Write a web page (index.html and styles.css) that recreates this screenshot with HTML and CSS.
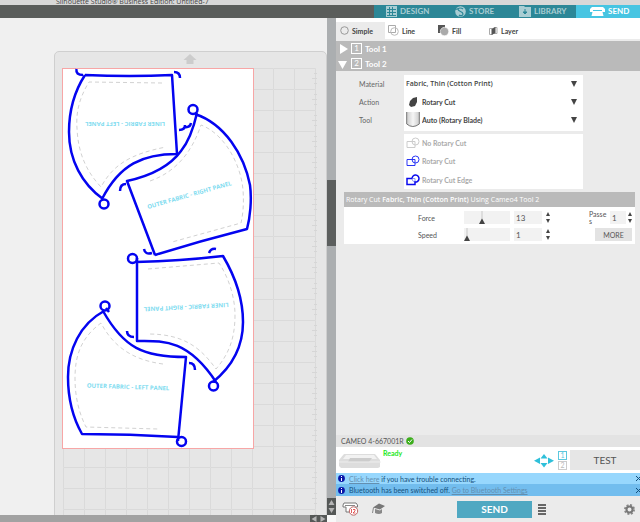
FILE: index.html
```html
<!DOCTYPE html>
<html lang="en">
<head>
    <meta charset="UTF-8">
    <meta name="viewport" content="width=device-width, initial-scale=1.0">
    <title>Silhouette Studio</title>
    <link rel="stylesheet" href="styles.css">
</head>
<body>

    <div class="titlebar"><span>Silhouette Studio® Business Edition: Untitled-7</span></div>

    <nav class="topbar">
        <a href="#design" class="tab tab-design">
            <svg width="11" height="11" viewBox="0 0 11 11"><rect width="11" height="11" fill="#a9cdd3"/><path d="M1 3.5h9M1 6.5h9M1 9.5h9M3.5 1v9M6.5 1v9" stroke="#2c8797"/></svg>
            DESIGN
        </a>
        <a href="#store" class="tab tab-store">
            <svg width="11" height="11" viewBox="0 0 11 11"><circle cx="5.5" cy="5.5" r="5.3" fill="#a9cdd3"/><path d="M0 3c2 1 3-1 5-1s3 1 3 1M3 3c0 3 5 2 5 5 0 2-3 2-4 1" fill="none" stroke="#2c8797" stroke-width="1.2"/></svg>
            STORE
        </a>
        <a href="#library" class="tab tab-library">
            <svg width="12" height="11" viewBox="0 0 12 11"><path d="M0 0h5l1 1h6v10H0z" fill="#a9cdd3"/><path d="M6 3v3M4 6h4L6 8z" fill="#2c8797" stroke="#2c8797"/></svg>
            LIBRARY
        </a>
        <a href="#send" class="tab tab-send">
            <svg width="15" height="10" viewBox="0 0 15 10"><path d="M2 0h11l2 2v3h-2.500l1 4H1.500l1-4H0V2z" fill="#fff"/><path d="M3 3.500h9" stroke="#47c5e2"/></svg>
            SEND
        </a>
    </nav>

    <div class="workspace">
        <div class="canvas-column">
            <main class="canvas">
                <div class="mat">
                    <svg width="271" height="600" viewBox="55 52 271 600">
                        <defs>
                            <pattern id="grid" x="63" y="68" width="21" height="21" patternUnits="userSpaceOnUse">
                                <path d="M.5 21V.5H21" fill="none" stroke="#dadada"/>
                            </pattern>
                            <pattern id="ruler" x="312" y="68" width="5" height="21" patternUnits="userSpaceOnUse">
                                <path d="M2 5.500h3M0 10.500h5M2 15.500h3" stroke="#d6d6d6"/>
                            </pattern>
                        </defs>
                        <path d="M190 54l6.500 6H193.500v4h-7v-4H183.500z" fill="#ccc"/>
                        <rect x="63" y="68" width="253" height="584" fill="url(#grid)"/>
                        <rect x="312" y="68" width="5" height="584" fill="url(#ruler)"/>
                        <rect x="62.500" y="68.500" width="191" height="380" fill="#fff" stroke="#f7a6a6"/>

                        <!-- seam allowances -->
                        <g class="seam">
                            <path d="M162 83L89 82C78 100 76 115 77 128C78 154 87 172 101 187C113 165 130 154 166 147"/>
                            <path d="M150 181C176 172 192 152 201 125C225 134 241 165 243 190C244 204 243 214 241 223L172 242"/>
                            <path d="M148 269L219 263C229 278 235 298 235 315C235 338 229 354 216 369C201 348 184 334 148 334"/>
                            <path d="M163 364C132 360 113 346 101 323C82 337 75 354 75 378C75 397 79 413 86 427L158 429"/>
                        </g>

                        <!-- cut lines -->
                        <g class="cut">
                            <path d="M85 75Q130 77 172 75L177 154C143 154 120 164 102 199M85 75C74 92 69 112 69 132C69 160 82 184 103 199"/>
                            <circle cx="104" cy="204" r="4.500"/>
                            <path d="M76.500 69q-1 6 6.500 6M174 72q6 0 6 6M179 130q6 0 6-5M184 127q6 1 7-4"/>

                            <path d="M155 255L127 181C150 176 170 166 181 151C190 140 194 126 197 113M195 114C225 124 244 155 250 185C252 200 250 218 247 229Q200 241 155 255"/>
                            <circle cx="193" cy="109.500" r="4.500"/>
                            <path d="M120 191q0-7 6-7M144 249q1 6 8 4"/>

                            <path d="M137 258V341C162 341 187 338 216 382M136 262Q180 261 223 256C236 278 243 300 243 322C243 346 234 365 213 382"/>
                            <circle cx="132.500" cy="258.500" r="4.500"/>
                            <circle cx="213.500" cy="386" r="4.500"/>
                            <path d="M209 253q2-5 7-4M127 331q0 6 7 6"/>

                            <path d="M103 311C124 348 143 357 186 357L178 441M104 311C80 324 68 350 68 377C68 399 73 418 82 434Q130 434 178 437"/>
                            <circle cx="105" cy="306" r="4.500"/>
                            <circle cx="181.500" cy="441.500" r="4.500"/>
                            <path d="M106 308l3 4M189 363q6 0 6 7"/>
                        </g>

                        <g class="piece-name">
                            <text transform="translate(125 122) rotate(180)">LINER FABRIC - LEFT PANEL</text>
                            <text transform="translate(190 197) rotate(-16)">OUTER FABRIC - RIGHT PANEL</text>
                            <text transform="translate(186 305) rotate(177)">LINER FABRIC - RIGHT PANEL</text>
                            <text transform="translate(128 389) rotate(2)">OUTER FABRIC - LEFT PANEL</text>
                        </g>
                    </svg>
                </div>
            </main>
            <div class="hscroll">
                <svg width="17" height="7" viewBox="0 0 17 7"><rect width="17" height="7" fill="#555857"/><path d="M6.500 1v6L1.500 4zM10.500 1v6l5-3z" fill="#b5b5b5"/></svg>
            </div>
        </div>

        <div class="vscroll">
            <div class="thumb"></div>
            <svg width="9" height="17" viewBox="0 0 9 17"><rect width="9" height="17" fill="#555857"/><path d="M4.500 2l3 5h-6zM4.500 15l3-5h-6z" fill="#b5b5b5"/></svg>
            <div class="corner"></div>
        </div>

        <aside class="panel">
            <div class="modes">
                <button class="mode mode-simple active">
                    <svg width="9" height="9" viewBox="0 0 9 9"><circle cx="4.500" cy="4.500" r="3.800" fill="none" stroke="#999"/></svg>
                    Simple
                </button>
                <button class="mode mode-line">
                    <svg width="11" height="11" viewBox="0 0 11 11"><path d="M.5.5h7v7h-7z" fill="none" stroke="#aaa"/><circle cx="6.500" cy="6.500" r="3.800" fill="none" stroke="#bbb"/></svg>
                    Line
                </button>
                <button class="mode mode-fill">
                    <svg width="11" height="11" viewBox="0 0 11 11"><path d="M0 0h7v8H0z" fill="#555"/><circle cx="6.500" cy="6.500" r="4.200" fill="#aaa" stroke="#fff" stroke-width=".6"/></svg>
                    Fill
                </button>
                <button class="mode mode-layer">
                    <svg width="9" height="10" viewBox="0 0 9 10"><path d="M.5 2.500h3v6h-3zM5 1.500h3v6H5z" fill="#fff" stroke="#aaa"/><path d="M2.500 3l4-2v6l-4 2z" fill="#555"/></svg>
                    Layer
                </button>
            </div>

            <div class="tool-row">
                <svg width="12" height="12" viewBox="0 0 12 12"><path d="M2 1l8 5L2 11z" fill="#fff"/></svg>
                <span class="tool-number">1</span>
                Tool 1
            </div>
            <div class="tool-row">
                <svg width="12" height="12" viewBox="0 0 12 12"><path d="M0 3h9l-4.500 8z" fill="#fff"/></svg>
                <span class="tool-number">2</span>
                Tool 2
            </div>

            <div class="settings">
                <div class="field-labels">
                    <label for="material">Material</label>
                    <label for="action">Action</label>
                    <label for="tool">Tool</label>
                </div>
                <div class="field-values">
                    <div class="selects">
                        <div class="select-row">
                            <select id="material"><option>Fabric, Thin (Cotton Print)</option></select>
                            <svg class="arrow" width="6" height="6" viewBox="0 0 6 6"><path d="M0 0h6L3 6z" fill="#444"/></svg>
                        </div>
                        <div class="select-row">
                            <svg class="pic" width="14" height="16" viewBox="0 0 14 16"><path d="M7 4l4-1v5l-2 4-4 1-2-2 1-4z" fill="#444"/></svg>
                            <select id="action"><option>Rotary Cut</option></select>
                            <svg class="arrow" width="6" height="6" viewBox="0 0 6 6"><path d="M0 0h6L3 6z" fill="#444"/></svg>
                        </div>
                        <div class="select-row">
                            <svg class="pic" width="14" height="16" viewBox="0 0 14 16"><defs><linearGradient id="blade"><stop offset="0" stop-color="#ccc"/><stop offset=".5" stop-color="#f6f6f6"/><stop offset="1" stop-color="#ccc"/></linearGradient></defs><path d="M.7 0v12q6 5 12.600 0V0z" fill="url(#blade)"/><path d="M.7 0v12q6 5 12.600 0V0" fill="none" stroke="#777"/></svg>
                            <select id="tool"><option>Auto (Rotary Blade)</option></select>
                            <svg class="arrow" width="6" height="6" viewBox="0 0 6 6"><path d="M0 0h6L3 6z" fill="#444"/></svg>
                        </div>
                    </div>
                    <div class="cut-options">
                        <button class="cut-option">
                            <svg width="14" height="12" viewBox="0 0 14 12"><path d="M1 4.500h8v6H1z" fill="none" stroke="#ccc"/><circle cx="9.500" cy="4.500" r="3.500" fill="none" stroke="#ccc"/></svg>
                            No Rotary Cut
                        </button>
                        <button class="cut-option">
                            <svg width="14" height="12" viewBox="0 0 14 12"><path d="M1 4.500h8v6H1z" fill="none" stroke="#2a35f5"/><circle cx="9.500" cy="4.500" r="3.500" fill="none" stroke="#2a35f5"/></svg>
                            Rotary Cut
                        </button>
                        <button class="cut-option">
                            <svg width="14" height="12" viewBox="0 0 14 12"><path d="M6 4.500h3v3.500M6 4.500a3.500 3.500 0 0 0 3 3.500" fill="none" stroke="#8f95fa"/><path d="M6 4.500H1v6h8V8a3.500 3.500 0 1 0-3-3.500" fill="none" stroke="#0a0aee" stroke-width="1.500"/></svg>
                            Rotary Cut Edge
                        </button>
                    </div>
                </div>
            </div>

            <section class="cut-settings">
                <h2>Rotary Cut <b>Fabric, Thin (Cotton Print)</b> Using Cameo4 Tool 2</h2>
                <div class="cut-grid">
                    <label for="force">Force</label>
                    <input type="range" id="force" min="1" max="33" value="13">
                    <input type="text" id="forceValue" class="value" value="13" aria-label="Force value">
                    <svg class="stepper" width="4" height="11" viewBox="0 0 4 11"><path d="M0 4l2-4 2 4zM0 7l2 4 2-4z" fill="#444"/></svg>
                    <div class="passes">
                        <label for="passes">Passe<br>s</label>
                        <input type="text" id="passes" class="value" value="1">
                        <svg class="stepper" width="4" height="11" viewBox="0 0 4 11"><path d="M0 4l2-4 2 4zM0 7l2 4 2-4z" fill="#444"/></svg>
                    </div>
                    <label for="speed">Speed</label>
                    <input type="range" id="speed" min="1" max="30" value="1">
                    <input type="text" id="speedValue" class="value" value="1" aria-label="Speed value">
                    <svg class="stepper" width="4" height="11" viewBox="0 0 4 11"><path d="M0 4l2-4 2 4zM0 7l2 4 2-4z" fill="#444"/></svg>
                    <button class="more">MORE</button>
                </div>
            </section>

            <footer class="machine">
                <div class="machine-name">
                    CAMEO 4-667001R
                    <svg width="8" height="8" viewBox="0 0 8 8"><circle cx="4" cy="4" r="3.800" fill="#3cae1c"/><path d="M2 4l1.500 1.500L6 2.500" fill="none" stroke="#fff"/></svg>
                </div>
                <div class="machine-status">
                    <svg class="cutter" width="44" height="15" viewBox="0 0 44 15"><path d="M6 1h31l5 6v7l-2 1H3l-2-2V7z" fill="#ddd"/><path d="M8 2h28l3 4H5z" fill="#f2f2f2"/><path d="M12 5h22l-3 4H10z" fill="#ccc"/><path d="M1 9h42" stroke="#eee"/></svg>
                    <span class="ready">Ready</span>
                    <svg class="move" width="20" height="15" viewBox="0 0 20 15"><path d="M10 1l3.500 4.500h-7zM10 14.500L13.500 10h-7zM0 7.700l6-3.200v6.400zM20 7.700l-6-3.200v6.400z" fill="#2fc0da"/></svg>
                    <div class="tool-picks"><span class="picked">1</span><span>2</span></div>
                    <button class="test">TEST</button>
                </div>
                <div class="notice">
                    <svg width="7" height="7" viewBox="0 0 7 7"><circle cx="3.500" cy="3.500" r="3.400" fill="#0916a8"/><path d="M3.500 1v1M3.500 3v3" stroke="#fff"/></svg>
                    <p><a href="#help">Click here</a> if you have trouble connecting.</p>
                    <button class="close" aria-label="Close"><svg width="4" height="5" viewBox="0 0 4 5"><path d="M0 0l5 5M5 0L0 5" stroke="#14507c"/></svg></button>
                </div>
                <div class="notice notice-dark">
                    <svg width="7" height="7" viewBox="0 0 7 7"><circle cx="3.500" cy="3.500" r="3.400" fill="#0916a8"/><path d="M3.500 1v1M3.500 3v3" stroke="#fff"/></svg>
                    <p>Bluetooth has been switched off. <a href="#bluetooth">Go to Bluetooth Settings</a></p>
                    <button class="close" aria-label="Close"><svg width="4" height="5" viewBox="0 0 4 5"><path d="M0 0l5 5M5 0L0 5" stroke="#14507c"/></svg></button>
                </div>
                <div class="actions">
                    <svg width="17" height="14" viewBox="0 0 17 14"><path d="M2 1h12l1.500 2v2H13v5H4V5H1V3z" fill="#fff" stroke="#777"/><path d="M3 3.500h10" stroke="#888"/><circle cx="11.500" cy="9" r="4.200" fill="#fff" stroke="#b66"/><path d="M9.500 7v4M11 7.500h2v1.500l-2 2h2.500" fill="none" stroke="#d33" stroke-width=".8"/></svg>
                    <svg width="14" height="12" viewBox="0 0 14 12"><path d="M8 .5l6 2.500-5 3.500-7-2z" fill="#777"/><path d="M4 6v4q4 2 7 0V6L9 7.500z" fill="#888"/><path d="M2.500 4.500L1.500 10" stroke="#888"/></svg>
                    <button class="send">SEND</button>
                    <svg width="8" height="11" viewBox="0 0 8 11"><path d="M0 1h8M0 4h8M0 7h8M0 10h8" stroke="#666" stroke-width="2"/></svg>
                    <svg class="gear" width="11" height="11" viewBox="0 0 11 11"><circle cx="5.500" cy="5.500" r="4.500" fill="none" stroke="#888" stroke-width="2" stroke-dasharray="2 1.530"/><circle cx="5.500" cy="5.500" r="3" fill="none" stroke="#777" stroke-width="2"/></svg>
                </div>
            </footer>
        </aside>
    </div>

</body>
</html>
```
FILE: styles.css
```css
* {
    box-sizing: border-box;
}
body {
    display: flex;
    flex-direction: column;
    height: 100vh;
    margin: 0;
    overflow: hidden;
    background-color: #ebebeb;
    color: #555;
    font-family: Lato, "Open Sans", sans-serif;
    font-size: 8px;
}
svg {
    display: block;
    flex: none;
}
button {
    padding: 0;
    border: none;
    background: none;
    color: inherit;
    font: inherit;
}
.titlebar {
    display: flex;
    align-items: flex-end;
    height: 5px;
    flex: none;
    padding-left: 56px;
    overflow: hidden;
    background-color: #d8d8d8;
    color: #444;
    font-family: "Open Sans", sans-serif;
    font-size: 7px;
    line-height: 7px;
}

/* page tabs */
.topbar {
    display: flex;
    justify-content: flex-end;
    height: 13px;
    flex: none;
    background-color: #5a5d5b;
}
.tab {
    display: flex;
    align-items: center;
    gap: 3px;
    background-color: #2c8797;
    color: #a9cdd3;
    font-size: 8px;
    font-weight: bold;
    line-height: 13px;
    text-decoration: none;
}
.tab-design {
    width: 78px;
    padding-left: 12px;
}
.tab-store {
    width: 66px;
    padding-left: 3px;
}
.tab-library {
    width: 58px;
    padding-left: 1px;
}
.tab-send {
    width: 64px;
    padding-left: 14px;
    background-color: #47c5e2;
    color: #fff;
}

.workspace {
    display: flex;
    flex: 1;
    min-height: 0;
}

/* drawing area */
.canvas-column {
    display: flex;
    flex-direction: column;
    flex: 1;
    min-width: 0;
}
.canvas {
    display: flex;
    justify-content: flex-end;
    flex: 1;
    min-height: 0;
    padding-top: 33px;
    overflow: hidden;
    background-color: #f0f0f0;
}
.mat {
    height: 602px;
    border: 1px solid #cfcfcf;
    border-radius: 5px;
    background-color: #e6e6e6;
}
.cut {
    fill: none;
    stroke: #0404f0;
    stroke-width: 2.5px;
    stroke-linejoin: round;
}
.seam {
    fill: none;
    stroke: #d2d2d2;
    stroke-dasharray: 4 3;
}
.piece-name {
    fill: #7fdcf0;
    font-family: "Open Sans", sans-serif;
    font-size: 6px;
    font-weight: 700;
    text-anchor: middle;
}
.hscroll {
    display: flex;
    justify-content: flex-end;
    height: 7px;
    flex: none;
    background-color: #a2a2a2;
}
.vscroll {
    display: flex;
    flex-direction: column;
    width: 9px;
    flex: none;
    background-color: #abaeb0;
}
.thumb {
    height: 66px;
    margin-top: 162px;
    margin-bottom: auto;
    background-color: #5c5f5e;
}
.corner {
    height: 7px;
    background-color: #f8f8f8;
}

/* send panel */
.panel {
    display: flex;
    flex-direction: column;
    width: 304px;
    flex: none;
    background-color: #ebebeb;
}
.modes {
    display: flex;
    height: 21px;
    margin-bottom: 2px;
    padding-top: 4px;
    background-color: #fff;
}
.mode {
    display: flex;
    align-items: center;
    gap: 3px;
    color: #444;
    font-size: 7px;
    font-weight: bold;
}
.mode.active {
    background-color: #ebebeb;
}
.mode-simple {
    width: 49px;
    padding-left: 4px;
}
.mode-line {
    width: 50px;
    padding-left: 3px;
}
.mode-fill {
    width: 50px;
    padding-left: 3px;
}
.mode-layer {
    width: 50px;
    padding-left: 4px;
}
.tool-row {
    display: flex;
    align-items: center;
    gap: 3px;
    height: 15px;
    padding-left: 2px;
    background-color: #bababa;
    color: #fff;
    font-size: 8px;
    font-weight: bold;
}
.tool-number {
    width: 11px;
    height: 11px;
    margin-left: -2px;
    border: 1px solid #fff;
    font-weight: normal;
    line-height: 9px;
    text-align: center;
}
.settings {
    display: flex;
    padding: 4px 57px 0 23px;
}
.field-labels {
    width: 45px;
    color: #666;
    font-size: 7px;
    line-height: 18px;
}
.field-labels label {
    display: block;
}
.field-values {
    flex: 1;
}
.selects,
.cut-options {
    background-color: #fff;
}
.selects {
    height: 56px;
    margin-bottom: 3px;
}
.select-row {
    display: flex;
    align-items: center;
    height: 18px;
    padding: 0 6px 0 2px;
}
.select-row select {
    flex: 1;
    min-width: 0;
    padding: 0;
    border: none;
    appearance: none;
    background: none;
    color: #444;
    font-family: inherit;
    font-size: 7px;
    font-weight: bold;
    line-height: 12px;
}
.select-row #material {
    font-family: "Open Sans", sans-serif;
    font-weight: 600;
}
.pic {
    margin-right: 2px;
}
.cut-options {
    display: flex;
    flex-direction: column;
    height: 55px;
}
.cut-option {
    display: flex;
    align-items: center;
    gap: 2px;
    flex: 1;
    padding-left: 2px;
    color: #aaa;
    font-size: 7px;
    font-weight: bold;
}
.cut-settings {
    margin: 3px 5px 0 8px;
    background-color: #fff;
}
.cut-settings h2 {
    height: 15px;
    margin: 0;
    padding-left: 2px;
    background-color: #bababa;
    color: #fff;
    font-family: "Open Sans", sans-serif;
    font-size: 7px;
    font-weight: normal;
    line-height: 15px;
}
.cut-settings h2 b {
    font-weight: 600;
}
.cut-grid {
    display: grid;
    grid-template-columns: 42px 46px 28px 4px 1fr;
    grid-template-rows: 13px 13px;
    column-gap: 4px;
    row-gap: 4px;
    align-items: center;
    padding: 4px 3px 3px 74px;
    font-size: 7px;
}
.cut-grid input {
    width: 100%;
    height: 13px;
    margin: 0;
    background-color: #f2f2f2;
}
.cut-grid input[type="range"] {
    appearance: none;
}
.cut-grid input::-webkit-slider-runnable-track {
    height: 13px;
}
.cut-grid input::-webkit-slider-thumb {
    width: 6px;
    height: 13px;
    appearance: none;
    background-color: #444;
    clip-path: polygon(48% 0, 52% 0, 52% 58%, 100% 100%, 0 100%, 48% 58%);
}
.cut-grid .value {
    padding: 0 0 0 2px;
    border: none;
    color: #555;
    font-family: inherit;
    font-size: 8px;
}
.passes {
    display: flex;
    align-items: center;
    justify-content: flex-end;
    gap: 2px;
    line-height: 7px;
}
.passes label {
    width: 19px;
}
.cut-grid .passes .value {
    width: 16px;
}
.more {
    width: 37px;
    height: 13px;
    justify-self: end;
    background-color: #e3e3e3;
    font-size: 7px;
}

/* machine status and actions */
.machine {
    margin-top: auto;
}
.machine-name {
    display: flex;
    align-items: center;
    gap: 2px;
    height: 12px;
    padding-left: 5px;
    background-color: #e3e3e3;
    font-size: 7px;
}
.machine-status {
    display: flex;
    align-items: center;
    height: 26px;
    padding-left: 2px;
    background-color: #fff;
}
.ready {
    align-self: flex-start;
    margin-left: 1px;
    color: #1be81b;
    font-size: 7px;
    font-weight: bold;
    line-height: 12px;
}
.move {
    margin-left: auto;
}
.tool-picks {
    display: flex;
    flex-direction: column;
    gap: 1px;
    margin: 0 3px 0 4px;
}
.tool-picks span {
    width: 9px;
    height: 9px;
    border: 1px solid #ccc;
    color: #bbb;
    font-size: 7px;
    line-height: 7px;
    text-align: center;
}
.tool-picks .picked {
    border-color: #5cc8de;
    color: #5cc8de;
}
.test {
    width: 70px;
    height: 20px;
    background-color: #e6e6e6;
    font-size: 10px;
}
.notice {
    display: flex;
    align-items: center;
    gap: 4px;
    height: 11px;
    padding-left: 2px;
    background-color: #97d7fd;
    color: #14507c;
    font-size: 7px;
}
.notice-dark {
    height: 12px;
    background-color: #72bdee;
}
.notice p {
    margin: 0;
}
.notice a {
    color: #638fb0;
}
.close {
    margin-left: auto;
}
.actions {
    display: flex;
    align-items: center;
    gap: 12px;
    height: 26px;
    padding: 0 5px 0 6px;
}
.send {
    width: 75px;
    height: 17px;
    margin-left: 60px;
    margin-right: -6px;
    background-color: #4fa8c2;
    color: #fff;
    font-size: 10px;
    font-weight: bold;
}
.gear {
    margin-left: auto;
}
```
